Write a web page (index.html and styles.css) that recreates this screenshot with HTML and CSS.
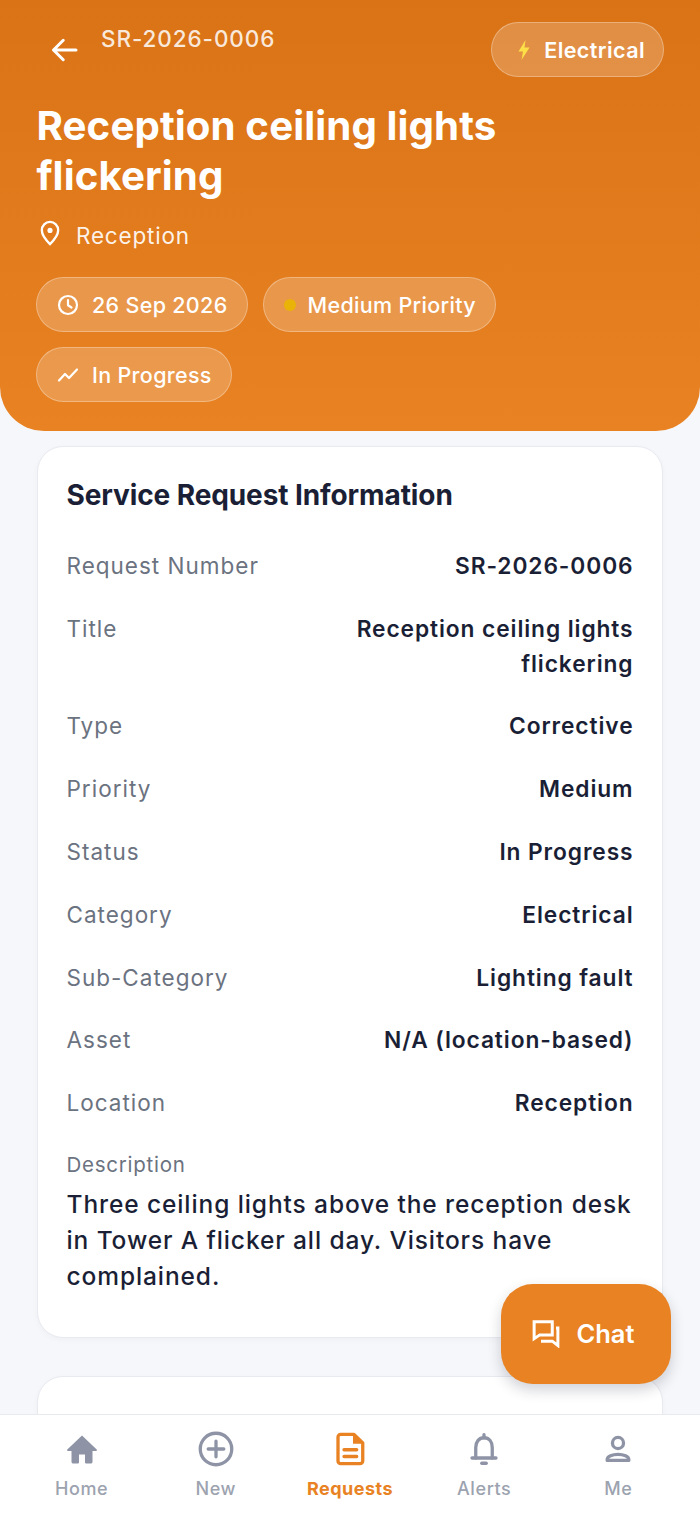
FILE: index.html
```html
<!DOCTYPE html>
<html lang="en">
<head>
  <meta charset="UTF-8" />
  <meta name="viewport" content="width=device-width, initial-scale=1.0"/>
  <title>SR-2026-0006</title>
  <link rel="stylesheet" href="styles.css">
</head>
<body>
  <div class="screen">
    <header class="hero">
      <div class="hero-top">
        <div class="hero-back">
          <svg class="back-icon" viewBox="0 0 24 24"><path d="M20 12H5M11.500 5.500 5 12l6.500 6.500"/></svg>
          <span class="hero-number">SR-2026-0006</span>
        </div>
        <span class="pill pill-type">
          <svg class="bolt-icon" viewBox="0 0 24 24"><path d="M13.500 2 6.500 13.500h4.500L9.500 22l8-12.500h-5z"/></svg>
          Electrical
        </span>
      </div>
      <h1>Reception ceiling lights flickering</h1>
      <div class="hero-location">
        <svg class="pin-icon" viewBox="0 0 24 24"><path d="M12 2.500c-3.900 0-7 3.100-7 7.200 0 5 7 11.800 7 11.800s7-6.800 7-11.800c0-4.100-3.100-7.200-7-7.200z"/><circle class="fill" cx="12" cy="9.800" r="2.200"/></svg>
        <span>Reception</span>
      </div>
      <div class="pills">
        <span class="pill">
          <svg class="pill-icon" viewBox="0 0 24 24"><circle cx="12" cy="12" r="9"/><path d="M12 7v5.300l3.500 2.200"/></svg>
          26 Sep 2026
        </span>
        <span class="pill"><i class="dot"></i>Medium Priority</span>
        <span class="pill">
          <svg class="pill-icon" viewBox="0 0 24 24"><path d="M3 17.500l6-6.500 4 4 8-8.500"/></svg>
          In Progress
        </span>
      </div>
    </header>

    <main class="content">
      <section class="card">
        <h2>Service Request Information</h2>
        <div class="row"><span class="label">Request Number</span><span class="value">SR-2026-0006</span></div>
        <div class="row"><span class="label">Title</span><span class="value">Reception ceiling lights flickering</span></div>
        <div class="row"><span class="label">Type</span><span class="value">Corrective</span></div>
        <div class="row"><span class="label">Priority</span><span class="value">Medium</span></div>
        <div class="row"><span class="label">Status</span><span class="value">In Progress</span></div>
        <div class="row"><span class="label">Category</span><span class="value">Electrical</span></div>
        <div class="row"><span class="label">Sub-Category</span><span class="value">Lighting fault</span></div>
        <div class="row"><span class="label">Asset</span><span class="value">N/A (location-based)</span></div>
        <div class="row"><span class="label">Location</span><span class="value">Reception</span></div>
        <div class="desc-label">Description</div>
        <p class="desc">Three ceiling lights above the reception desk in Tower A flicker all day. Visitors have complained.</p>
      </section>
      <section class="card card-next"></section>
    </main>

    <button class="chat-btn">
      <svg class="chat-icon" viewBox="0 0 24 24"><path d="M2.500 3h14.500v10.500H7l-4.500 3z"/><path d="M20 8h1.500v14L17 18.500H8"/></svg>
      Chat
    </button>

    <nav class="tabbar">
      <a class="tab">
        <svg viewBox="0 0 24 24"><path class="solid" d="M12 3 2.200 12.300c-.4.400-.1 1 .4 1H5v7.200c0 .7.500 1.200 1.200 1.200h2.900c.5 0 .9-.4.900-.9v-5.100h4v5.100c0 .5.400.9.900.9h2.900c.7 0 1.200-.5 1.200-1.200v-7.200h2.400c.5 0 .8-.6.400-1z"/></svg>
        Home
      </a>
      <a class="tab">
        <svg viewBox="0 0 24 24"><circle cx="12" cy="12" r="10.500"/><path d="M12 6.800v10.400M6.800 12h10.400"/></svg>
        New
      </a>
      <a class="tab tab-active">
        <svg viewBox="0 0 24 24"><path d="M4 4c0-1 .8-1.800 1.800-1.800h8.700L20.500 8v12c0 1-.8 1.800-1.800 1.800H5.800C4.800 21.800 4 21 4 20z"/><path class="solid" d="M14 2.500 20.500 8.500H14z"/><path d="M8 12.500h8.500M8 17h8.500"/></svg>
        Requests
      </a>
      <a class="tab">
        <svg viewBox="0 0 24 24"><path d="M6.500 18V11c0-3.600 2-6.500 5.500-6.500s5.500 2.900 5.500 6.500v7"/><path d="M4 18h16"/><path d="M12 2.500v2"/><path d="M10.500 21.500h3"/></svg>
        Alerts
      </a>
      <a class="tab">
        <svg viewBox="0 0 24 24"><circle cx="12" cy="8" r="3.700"/><path d="M4.800 19.600V19c0-2 3.500-3.400 7.200-3.400s7.200 1.400 7.200 3.400v.6z"/></svg>
        Me
      </a>
    </nav>
  </div>
</body>
</html>
```

FILE: styles.css
```css
* {
  box-sizing: border-box;
}
html, body {
  margin: 0;
  padding: 0;
}
body {
  font-family: Inter, "Noto Sans", sans-serif;
  background: #f6f7fa;
  color: #1a1f36;
}
.screen {
  position: relative;
  width: 700px;
  height: 1515px;
  overflow: hidden;
  display: flex;
  flex-direction: column;
}

/* header */
.hero {
  height: 431px;
  flex: none;
  padding: 22px 36px 0 36px;
  background: linear-gradient(180deg, #d97316, #e88222);
  border-radius: 0 0 44px 44px;
  color: #fff;
}
.hero-top {
  display: flex;
  justify-content: space-between;
  align-items: flex-start;
  height: 55px;
}
.hero-back {
  display: flex;
  align-items: flex-start;
  gap: 18px;
  padding-left: 10px;
}
.back-icon {
  width: 36px;
  height: 36px;
  margin-top: 10px;
  fill: none;
  stroke: #fff;
  stroke-width: 2;
  stroke-linecap: round;
  stroke-linejoin: round;
}
.hero-number {
  margin-left: 1px;
  padding-top: 1px;
  font-size: 22.500px;
  font-weight: 500;
  letter-spacing: 0.9px;
  line-height: 32px;
  color: rgba(255, 255, 255, 0.85);
}
.hero h1 {
  margin: 24px 0 0 0.500px;
  max-width: 560px;
  font-size: 40.250px;
  letter-spacing: 0.1px;
  line-height: 50px;
  font-weight: 700;
}
.hero-location {
  display: flex;
  align-items: center;
  gap: 12px;
  height: 40px;
  margin-top: 14px;
  font-size: 22.500px;
  letter-spacing: 0.8px;
  color: rgba(255, 255, 255, 0.92);
}
.pin-icon {
  width: 28px;
  height: 28px;
  margin-top: -4px;
  fill: none;
  stroke: #fff;
  stroke-width: 2;
}
.pin-icon .fill {
  fill: #fff;
  stroke: none;
}
.pills {
  display: flex;
  flex-wrap: wrap;
  gap: 15px;
  margin-top: 22px;
}
.pill {
  display: inline-flex;
  align-items: center;
  gap: 12px;
  height: 55px;
  padding: 0 19px;
  font-size: 21.500px;
  font-weight: 500;
  letter-spacing: 0.32px;
  color: #fff;
  background: rgba(255, 255, 255, 0.2);
  border: 1.500px solid rgba(255, 255, 255, 0.3);
  border-radius: 28px;
  white-space: nowrap;
}
.pill-type {
  font-weight: 600;
  gap: 8px;
  letter-spacing: 0.42px;
  padding: 0 18px 0 20px;
}
.pill-icon {
  width: 24px;
  height: 24px;
  fill: none;
  stroke: #fff;
  stroke-width: 2.200;
  stroke-linecap: round;
  stroke-linejoin: round;
}
.bolt-icon {
  width: 24px;
  height: 24px;
  fill: #fde047;
}
.dot {
  width: 12px;
  height: 12px;
  margin-left: 1px;
  border-radius: 50%;
  background: #eab308;
}

/* main card */
.content {
  flex: 1;
  padding: 15px 37px 0;
}
.card {
  padding: 29px 28.500px 0;
  height: 892px;
  background: #fff;
  border: 1.500px solid #e8eaf0;
  border-radius: 26px;
  box-shadow: 0 2px 6px rgba(26, 31, 54, 0.03);
}
.card-next {
  height: 100px;
  margin-top: 38px;
}
.card h2 {
  margin: 0 0 21px;
  font-size: 28px;
  letter-spacing: -0.1px;
  line-height: 38px;
  font-weight: 700;
}
.row {
  display: flex;
  justify-content: space-between;
  gap: 40px;
  padding: 14px 0;
  line-height: 34.800px;
}
.label {
  flex: none;
  font-size: 22.500px;
  letter-spacing: 1px;
  color: #6b7280;
}
.value {
  max-width: 300px;
  font-size: 22.750px;
  font-weight: 600;
  letter-spacing: 0.9px;
  text-align: right;
}
.desc-label {
  margin-top: 15px;
  font-size: 20.500px;
  letter-spacing: 0.75px;
  line-height: 30px;
  color: #6b7280;
}
.desc {
  margin: 6px 0 0;
  font-size: 24.500px;
  font-weight: 500;
  letter-spacing: 0.9px;
  line-height: 36px;
}

/* floating chat */
.chat-btn {
  position: absolute;
  left: 501px;
  top: 1284px;
  width: 170px;
  height: 100px;
  display: flex;
  align-items: center;
  justify-content: center;
  gap: 15px;
  padding: 0 6px 2px 0;
  font-family: inherit;
  font-size: 25.500px;
  font-weight: 600;
  color: #fff;
  background: #e88222;
  border: none;
  border-radius: 32px;
  box-shadow: 0 6px 14px rgba(26, 31, 54, 0.2);
}
.chat-icon {
  width: 30px;
  height: 30px;
  fill: none;
  stroke: #fff;
  stroke-width: 2.400;
}

/* bottom nav */
.tabbar {
  position: absolute;
  left: 0;
  right: 0;
  bottom: 0;
  height: 101px;
  display: flex;
  justify-content: space-around;
  padding: 0 14.500px;
  background: #fff;
  border-top: 1.500px solid #e8eaf0;
}
.tab {
  flex: 1;
  display: flex;
  flex-direction: column;
  align-items: center;
  padding-top: 16px;
  gap: 11px;
  font-size: 18px;
  font-weight: 500;
  letter-spacing: 0.6px;
  color: #9ca3af;
}
.tab svg {
  width: 36px;
  height: 36px;
  fill: none;
  stroke: #8e94a6;
  stroke-width: 2.200;
  stroke-linecap: round;
  stroke-linejoin: round;
}
.tab .solid {
  fill: #8e94a6;
  stroke: none;
}
.tab-active {
  font-weight: 700;
  letter-spacing: 0.5px;
  color: #e88222;
}
.tab-active svg {
  stroke: #e88222;
}
.tab-active .solid {
  fill: #e88222;
}
```
